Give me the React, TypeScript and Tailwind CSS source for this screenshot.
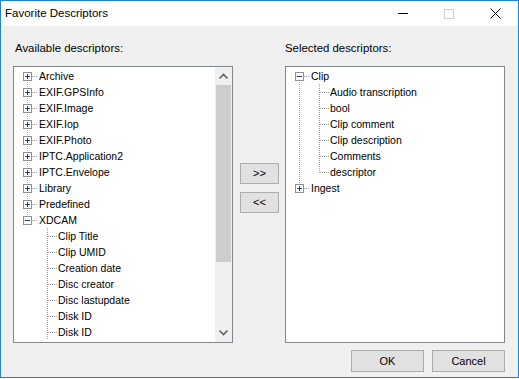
import type { ReactNode } from "react";

type Row = {
  label: string;
  depth: 0 | 1;
  state?: "open" | "closed"; // root nodes only
  first?: boolean;
  last?: boolean;
  trunk?: boolean; // child row whose parent has a sibling below
};

const AVAILABLE: Row[] = [
  { label: "Archive", depth: 0, state: "closed", first: true },
  { label: "EXIF.GPSInfo", depth: 0, state: "closed" },
  { label: "EXIF.Image", depth: 0, state: "closed" },
  { label: "EXIF.Iop", depth: 0, state: "closed" },
  { label: "EXIF.Photo", depth: 0, state: "closed" },
  { label: "IPTC.Application2", depth: 0, state: "closed" },
  { label: "IPTC.Envelope", depth: 0, state: "closed" },
  { label: "Library", depth: 0, state: "closed" },
  { label: "Predefined", depth: 0, state: "closed" },
  { label: "XDCAM", depth: 0, state: "open", last: true },
  { label: "Clip Title", depth: 1 },
  { label: "Clip UMID", depth: 1 },
  { label: "Creation date", depth: 1 },
  { label: "Disc creator", depth: 1 },
  { label: "Disc lastupdate", depth: 1 },
  { label: "Disk ID", depth: 1 },
  { label: "Disk ID", depth: 1 },
];

const SELECTED: Row[] = [
  { label: "Clip", depth: 0, state: "open", first: true },
  { label: "Audio transcription", depth: 1, trunk: true },
  { label: "bool", depth: 1, trunk: true },
  { label: "Clip comment", depth: 1, trunk: true },
  { label: "Clip description", depth: 1, trunk: true },
  { label: "Comments", depth: 1, trunk: true },
  { label: "descriptor", depth: 1, trunk: true, last: true },
  { label: "Ingest", depth: 0, state: "closed", last: true },
];

const DOT = "#a0a0a0";
const GLYPH = "#23408e";

function Connector({ row }: { row: Row }) {
  if (row.depth === 0) {
    return (
      <svg width={25} height={16} shapeRendering="crispEdges" className="shrink-0">
        <line x1={13.5} x2={13.5} y1={row.first ? 8 : 0} y2={row.last ? 9 : 16} stroke={DOT} strokeDasharray="1 1" />
        <line x1={18} x2={24} y1={8.5} y2={8.5} stroke={DOT} strokeDasharray="1 1" />
        <rect x={9.5} y={4.5} width={8} height={8} fill="#fff" stroke="#919191" />
        <line x1={11} x2={16} y1={8.5} y2={8.5} stroke={GLYPH} />
        {row.state === "closed" && <line x1={13.5} x2={13.5} y1={6} y2={11} stroke={GLYPH} />}
      </svg>
    );
  }
  return (
    <svg width={44} height={16} shapeRendering="crispEdges" className="shrink-0">
      {row.trunk && <line x1={13.5} x2={13.5} y1={0} y2={16} stroke={DOT} strokeDasharray="1 1" />}
      <line x1={33.5} x2={33.5} y1={0} y2={row.last ? 9 : 16} stroke={DOT} strokeDasharray="1 1" />
      <line x1={34} x2={43} y1={8.5} y2={8.5} stroke={DOT} strokeDasharray="1 1" />
    </svg>
  );
}

function Scrollbar() {
  return (
    <div className="flex w-[17px] shrink-0 flex-col bg-[#f0f0f0]">
      <svg width={17} height={17} className="shrink-0">
        <path d="M4.5 11.5 L8.5 7.5 L12.5 11.5" fill="none" stroke="#606060" strokeWidth={1.6} />
      </svg>
      <div className="flex-1 pt-[1px]">
        <div className="mx-[1px] h-[177px] bg-[#cdcdcd]" />
      </div>
      <svg width={17} height={17} className="shrink-0">
        <path d="M4.5 5.5 L8.5 9.5 L12.5 5.5" fill="none" stroke="#606060" strokeWidth={1.6} />
      </svg>
    </div>
  );
}

function TreeBox({ rows, scroll }: { rows: Row[]; scroll?: boolean }) {
  return (
    <div className="mt-[11px] flex h-[277px] border border-[#828790] bg-white">
      <div className="flex-1 overflow-hidden pt-[1px]">
        {rows.map((row, i) => (
          <div key={i} className="flex h-4 items-center">
            <Connector row={row} />
            <span className="whitespace-nowrap text-[10.5px] leading-4 text-black">{row.label}</span>
          </div>
        ))}
      </div>
      {scroll && <Scrollbar />}
    </div>
  );
}

function Button({ children, className }: { children: ReactNode; className: string }) {
  return (
    <button
      type="button"
      className={`flex items-center justify-center border border-[#adadad] bg-[#e1e1e1] text-[11px] leading-none text-black ${className}`}
    >
      {children}
    </button>
  );
}

function TitleBar() {
  return (
    <div className="flex h-[25px] shrink-0 items-center bg-white">
      <span className="flex-1 pl-[4px] text-[11.5px] text-black">Favorite Descriptors</span>
      <div className="flex h-full w-[46px] items-center justify-center">
        <div className="h-px w-[10px] bg-black" />
      </div>
      <div className="flex h-full w-[46px] items-center justify-center">
        <div className="h-[10px] w-[10px] border border-[#cccccc]" />
      </div>
      <div className="flex h-full w-[46px] items-center justify-center">
        <svg width={11} height={11}>
          <path d="M0.5 0.5 L10.5 10.5 M10.5 0.5 L0.5 10.5" stroke="#000" strokeWidth={1} />
        </svg>
      </div>
    </div>
  );
}

export default function App() {
  return (
    <div className="h-[379px] w-[519px] bg-white font-['Liberation_Sans',Arial,sans-serif]">
      <div className="flex h-[378px] flex-col border border-[#1883d7] bg-[#f0f0f0]">
        <TitleBar />
        <div className="flex flex-1 flex-col pl-[12px] pr-[13px] pt-[16px]">
          <div className="flex">
            <div className="w-[220px]">
              <div className="h-[13px] pl-[2px] text-[11.4px] leading-[13px] text-black">Available descriptors:</div>
              <TreeBox rows={AVAILABLE} scroll />
            </div>
            <div className="ml-[7px] flex w-[39px] flex-col gap-[8px] pt-[121px]">
              <Button className="h-[21px] w-[39px]">&gt;&gt;</Button>
              <Button className="h-[21px] w-[39px]">&lt;&lt;</Button>
            </div>
            <div className="ml-[6px] w-[220px]">
              <div className="h-[13px] text-[11.4px] leading-[13px] text-black">Selected descriptors:</div>
              <TreeBox rows={SELECTED} />
            </div>
          </div>
          <div className="mt-[7px] flex justify-end gap-[8px]">
            <Button className="h-[22px] w-[73px]">OK</Button>
            <Button className="h-[22px] w-[73px]">Cancel</Button>
          </div>
        </div>
      </div>
    </div>
  );
}
